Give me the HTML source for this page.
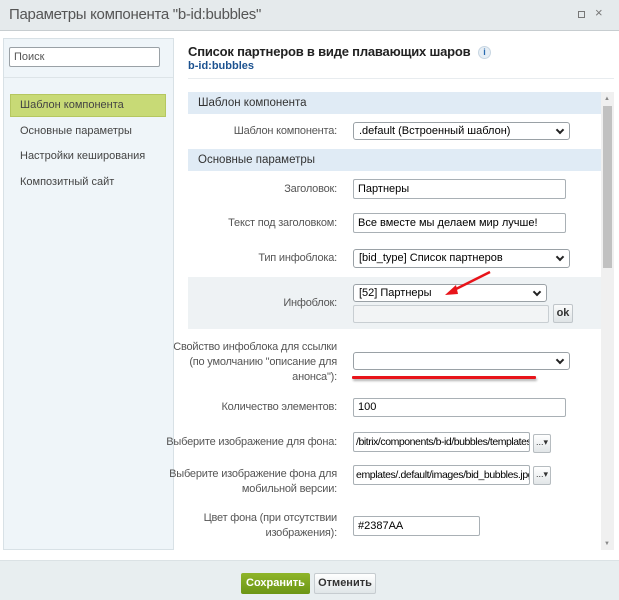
<!DOCTYPE html>
<html><head><meta charset="utf-8"><style>
*{box-sizing:border-box;margin:0;padding:0}
body{width:619px;height:600px;overflow:hidden;background:#fff;font-family:"Liberation Sans",Arial,sans-serif;font-size:11px;color:#333;position:relative}
.a{position:absolute}
.inp{position:absolute;background:#fff;border:1px solid #a9b0b5;border-radius:2px;padding:0 4px;font-size:11px;color:#000;line-height:18px;white-space:nowrap;overflow:hidden}
.sel{position:absolute;background:#fff;border:1px solid #9aa1a6;border-radius:3px;padding:0 5px;font-size:11px;color:#000;line-height:16px}
.sel:after{content:"";position:absolute;right:6px;top:4px;width:4px;height:4px;border-right:2px solid #222;border-bottom:2px solid #222;transform:rotate(45deg)}
.lbl{position:absolute;right:282px;text-align:right;color:#555;font-size:11px;line-height:15px;letter-spacing:-0.2px}
.hdr{position:absolute;left:188px;width:413px;height:22px;background:#e0ebf5;font-size:11.5px;color:#333;padding-left:10px;line-height:22px}
.b3{position:absolute;width:18px;height:19px;border:1px solid #b6bcc0;background:linear-gradient(#fff,#e2e6e8);border-radius:2px;font-size:9px;line-height:14px;padding-left:2px;color:#333}
</style></head><body>
<div class="a" style="left:0;top:0;width:619px;height:31px;background:#e5eaec;border-bottom:1px solid #c7cdd0"></div>
<div class="a" style="left:9px;top:6px;font-size:15px;color:#555;letter-spacing:-0.3px">Параметры компонента "b-id:bubbles"</div>
<div class="a" style="left:578px;top:11px;width:7px;height:7px;border:1px solid #777"></div>
<div class="a" style="left:595px;top:5px;font-size:13px;color:#777">×</div>

<div class="a" style="left:3px;top:38px;width:171px;height:512px;background:#eff5f9;border:1px solid #d8e1e6"></div>
<div class="a" style="left:9px;top:47px;width:151px;height:20px;background:#fff;border:1px solid #9aa1a6;border-radius:2px;padding-left:4px;line-height:18px;color:#555">Поиск</div>
<div class="a" style="left:4px;top:77px;width:169px;height:1px;background:#dde4e8"></div>
<div class="a" style="left:10px;top:94px;width:156px;height:23px;background:#c8da76;border:1px solid #b5c760;padding-left:9px;line-height:21px;color:#444">Шаблон компонента</div>
<div class="a" style="left:20px;top:125px;color:#444">Основные параметры</div>
<div class="a" style="left:20px;top:150px;color:#444">Настройки кеширования</div>
<div class="a" style="left:20px;top:176px;color:#444">Композитный сайт</div>

<div class="a" style="left:188px;top:44px;font-size:13px;font-weight:bold;color:#222;letter-spacing:-0.2px">Список партнеров в виде плавающих шаров</div>
<div class="a" style="left:478px;top:46px;width:13px;height:13px;border-radius:50%;background:#e6eef5;border:1px solid #c8d6e2;color:#2a6ab0;font-size:9px;font-weight:bold;text-align:center;line-height:11px">i</div>
<div class="a" style="left:188px;top:60px;font-weight:bold;color:#1c5290;font-size:11px">b-id:bubbles</div>
<div class="a" style="left:188px;top:78px;width:426px;height:1px;background:#e8ecef"></div>

<div class="a" style="left:601px;top:92px;width:13px;height:458px;background:#f0f0f0"></div>
<div class="a" style="left:604px;top:96px;font-size:6px;color:#888">▲</div>
<div class="a" style="left:603px;top:106px;width:9px;height:162px;background:#c1c1c1"></div>
<div class="a" style="left:604px;top:541px;font-size:6px;color:#888">▼</div>

<div class="hdr" style="top:92px">Шаблон компонента</div>
<div class="lbl" style="top:124px">Шаблон компонента:</div>
<div class="sel" style="left:353px;top:122px;width:217px;height:18px">.default (Встроенный шаблон)</div>
<div class="hdr" style="top:149px">Основные параметры</div>
<div class="lbl" style="top:182px">Заголовок:</div>
<div class="inp" style="left:353px;top:179px;width:213px;height:20px">Партнеры</div>
<div class="lbl" style="top:216px">Текст под заголовком:</div>
<div class="inp" style="left:353px;top:213px;width:213px;height:20px">Все вместе мы делаем мир лучше!</div>
<div class="lbl" style="top:251px">Тип инфоблока:</div>
<div class="sel" style="left:353px;top:249px;width:217px;height:19px;line-height:17px">[bid_type] Список партнеров</div>
<div class="a" style="left:188px;top:277px;width:413px;height:52px;background:#eef2f4"></div>
<div class="lbl" style="top:296px">Инфоблок:</div>
<div class="sel" style="left:353px;top:284px;width:194px;height:18px">[52] Партнеры</div>
<div class="a" style="left:353px;top:305px;width:196px;height:18px;background:#f2f4f5;border:1px solid #c8ced2;border-radius:2px"></div>
<div class="a" style="left:553px;top:304px;width:20px;height:19px;background:linear-gradient(#fafbfb,#dfe4e6);border:1px solid #c0c6ca;border-radius:2px;font-size:11px;font-weight:bold;text-align:center;line-height:17px;color:#333">ok</div>
<div class="lbl" style="top:340px">Свойство инфоблока для ссылки<br>(по умолчанию "описание для<br>анонса"):</div>
<div class="sel" style="left:353px;top:352px;width:217px;height:18px"></div>
<div class="a" style="left:352px;top:376px;width:184px;height:3px;background:#e8141a;border-radius:1px;box-shadow:1px 2px 2px rgba(0,0,0,.3)"></div>
<svg class="a" style="left:440px;top:268px" width="55" height="32"><line x1="50" y1="4" x2="12" y2="23" stroke="#e8141a" stroke-width="2.5"/><polygon points="5,27 16,17 18,26" fill="#e8141a"/></svg>
<div class="lbl" style="top:400px">Количество элементов:</div>
<div class="inp" style="left:353px;top:398px;width:213px;height:19px;line-height:17px">100</div>
<div class="lbl" style="top:435px">Выберите изображение для фона:</div>
<div class="inp" style="left:353px;top:432px;width:177px;height:20px;padding-left:2px;font-size:10.5px;letter-spacing:-0.45px">/bitrix/components/b-id/bubbles/templates</div>
<div class="b3" style="left:533px;top:434px">...▾</div>
<div class="lbl" style="top:467px">Выберите изображение фона для<br>мобильной версии:</div>
<div class="inp" style="left:353px;top:465px;width:177px;height:20px;padding-left:2px;font-size:10.5px;letter-spacing:-0.4px">emplates/.default/images/bid_bubbles.jpg</div>
<div class="b3" style="left:533px;top:466px">...▾</div>
<div class="lbl" style="top:511px">Цвет фона (при отсутствии<br>изображения):</div>
<div class="inp" style="left:353px;top:516px;width:127px;height:20px">#2387AA</div>

<div class="a" style="left:0;top:560px;width:619px;height:40px;background:#e8eef0;border-top:1px solid #dbe2e5"></div>
<div class="a" style="left:241px;top:573px;width:69px;height:21px;background:linear-gradient(#8fb52a,#6b9514);border-radius:2px;color:#fff;font-weight:bold;text-align:center;line-height:21px">Сохранить</div>
<div class="a" style="left:314px;top:573px;width:62px;height:21px;background:linear-gradient(#fff,#e0e6e8);border:1px solid #c6ccd0;border-radius:2px;color:#333;font-weight:bold;text-align:center;line-height:19px">Отменить</div>
</body></html>
